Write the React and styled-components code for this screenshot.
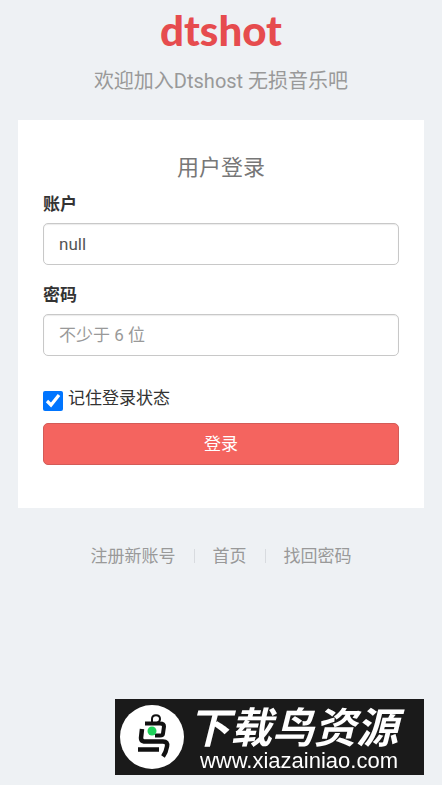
import React from 'react';
import styled, { createGlobalStyle, css } from 'styled-components';

const color = {
  page: '#eef1f4',
  red: '#e64c4e',
  button: '#f4645f',
  grey: '#999',
  border: '#c8c8c8',
  text: '#333',
};

export default function App() {
  return (
    <>
      <GlobalStyle />
      <Page>
        <Header>
          <Logo href="#home">dtshot</Logo>
          <Tagline>欢迎加入Dtshost 无损音乐吧</Tagline>
        </Header>

        <Panel onSubmit={(e) => e.preventDefault()}>
          <Title>用户登录</Title>
          <Field>
            <Label htmlFor="account">账户</Label>
            <Input id="account" type="text" name="account" defaultValue="null" />
          </Field>
          <Field>
            <Label htmlFor="password">密码</Label>
            <Input id="password" type="password" name="password" placeholder="不少于 6 位" />
          </Field>
          <Remember>
            <Checkbox id="remember" type="checkbox" name="remember" defaultChecked />
            <label htmlFor="remember">记住登录状态</label>
          </Remember>
          <Submit type="submit">登录</Submit>
        </Panel>

        <Links>
          <a href="#register">注册新账号</a>
          <Divider />
          <a href="#home">首页</a>
          <Divider />
          <a href="#forgot">找回密码</a>
        </Links>
      </Page>

      <Banner>
        <BirdIcon />
        <BannerText>
          <BannerName>下载鸟资源</BannerName>
          <BannerUrl>www.xiazainiao.com</BannerUrl>
        </BannerText>
      </Banner>
    </>
  );
}

function BirdIcon() {
  return (
    <Bird viewBox="0 0 64 64" aria-hidden="true">
      <circle cx="32" cy="32" r="32" fill="#fff" />
      <g fill="none" stroke="#111" strokeLinejoin="round">
        <path d="M32 18v-4c0-5 8-5 8 0 0 2-1 3-3 4" strokeWidth="2" />
        <path d="M25 18.500h15q4 0 4 3l-1 7q0 2-3 2h-5" strokeWidth="4" />
        <path d="M22 24l-1 9q0 3 3 3.500h19q5 0 4 5-1 6-4 10" strokeWidth="4.500" />
        <path d="M18 44.500h21" strokeWidth="4.500" />
      </g>
      <circle cx="32" cy="26" r="4.500" fill="#20d35b" />
    </Bird>
  );
}

const GlobalStyle = createGlobalStyle`
  * {
    box-sizing: border-box;
  }
  body {
    margin: 0;
    background: ${color.page};
    color: ${color.text};
    font: 17px/24px Roboto, 'Noto Sans CJK SC', sans-serif;
  }
  a {
    color: inherit;
    text-decoration: none;
  }
`;

const Page = styled.main`
  padding: 8px 18px 96px;
`;
const Header = styled.header`
  display: flex;
  flex-direction: column;
  align-items: center;
  gap: 17px;
`;
const Logo = styled.a`
  && {
    color: ${color.red};
  }
  font: 900 42px/44px Lato, sans-serif;
`;
const Tagline = styled.p`
  margin: 0;
  color: ${color.grey};
  font-size: 20px;
  line-height: 24px;
`;

const Panel = styled.form`
  margin-top: 27px;
  padding: 32px 25px 43px;
  background: #fff;
`;
const Title = styled.h1`
  margin: 0 0 8px;
  color: #777;
  font-size: 22px;
  font-weight: 400;
  line-height: 32px;
  text-align: center;
`;
const Field = styled.div`
  display: grid;
  gap: 7px;
  margin-bottom: 18px;
`;
const Label = styled.label`
  font-weight: 700;
`;

const controlStyle = css`
  display: block;
  width: 100%;
  height: 42px;
  border-radius: 5px;
  font: inherit;
`;
const Input = styled.input`
  ${controlStyle}
  padding: 0 15px;
  border: 1px solid ${color.border};
  background: #fff;
  box-shadow: inset 0 1px 1px rgba(0, 0, 0, 0.08);
  color: #555;

  &::placeholder {
    color: ${color.grey};
  }
`;
const Remember = styled.div`
  display: flex;
  gap: 5px;
  margin: 30px 0 12px;
`;
const Checkbox = styled.input`
  width: 20px;
  height: 20px;
  margin: 5px 0 0;
  accent-color: #0075ff;
`;
const Submit = styled.button`
  ${controlStyle}
  border: 1px solid #d35b57;
  background: ${color.button};
  color: #fff;
  cursor: pointer;

  &:hover {
    background: #ee5752;
  }
`;

const Links = styled.nav`
  display: flex;
  align-items: center;
  justify-content: center;
  gap: 18px;
  margin-top: 36px;
  color: ${color.grey};
`;
const Divider = styled.span`
  width: 1px;
  height: 14px;
  background: #d8dbdf;
`;

/* stays above the page, pinned to the bottom right */
const Banner = styled.aside`
  position: fixed;
  right: 18px;
  bottom: 10px;
  display: flex;
  align-items: center;
  gap: 4px;
  height: 76px;
  padding: 0 26px 0 5px;
  background: #1a1a1a;
  color: #fff;
`;
const Bird = styled.svg`
  width: 64px;
  height: 64px;
`;
const BannerText = styled.div`
  display: flex;
  flex-direction: column;
  align-items: flex-end;
  padding-top: 4px;
`;
const BannerName = styled.strong`
  font: italic 700 42px/44px 'Noto Sans CJK SC', sans-serif;
`;
const BannerUrl = styled.span`
  font: 22px/28px 'Liberation Sans', sans-serif;
`;
